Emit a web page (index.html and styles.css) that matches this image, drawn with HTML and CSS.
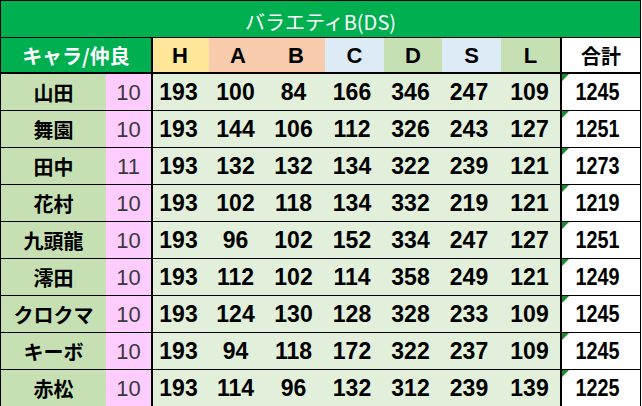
FILE: index.html
```html
<!DOCTYPE html>
<html lang="ja">
<head>
<meta charset="utf-8">
<title>バラエティB(DS)</title>
<link rel="stylesheet" href="styles.css">
</head>
<body>
<div class="sheet">
  <div class="title">バラエティB(DS)</div>

  <div class="hd hd-name">キャラ/仲良</div>
  <div class="hd c-h">H</div>
  <div class="hd c-a">A</div>
  <div class="hd c-b">B</div>
  <div class="hd c-c">C</div>
  <div class="hd c-d">D</div>
  <div class="hd c-s">S</div>
  <div class="hd c-l">L</div>
  <div class="hd c-total">合計</div>

  <div class="name">山田</div><div class="fav">10</div>
  <div class="num">193</div><div class="num">100</div><div class="num">84</div><div class="num">166</div><div class="num">346</div><div class="num">247</div><div class="num last">109</div>
  <div class="total"><span>1245</span></div>

  <div class="name">舞園</div><div class="fav">10</div>
  <div class="num">193</div><div class="num">144</div><div class="num">106</div><div class="num">112</div><div class="num">326</div><div class="num">243</div><div class="num last">127</div>
  <div class="total"><span>1251</span></div>

  <div class="name">田中</div><div class="fav">11</div>
  <div class="num">193</div><div class="num">132</div><div class="num">132</div><div class="num">134</div><div class="num">322</div><div class="num">239</div><div class="num last">121</div>
  <div class="total"><span>1273</span></div>

  <div class="name">花村</div><div class="fav">10</div>
  <div class="num">193</div><div class="num">102</div><div class="num">118</div><div class="num">134</div><div class="num">332</div><div class="num">219</div><div class="num last">121</div>
  <div class="total"><span>1219</span></div>

  <div class="name">九頭龍</div><div class="fav">10</div>
  <div class="num">193</div><div class="num">96</div><div class="num">102</div><div class="num">152</div><div class="num">334</div><div class="num">247</div><div class="num last">127</div>
  <div class="total"><span>1251</span></div>

  <div class="name">澪田</div><div class="fav">10</div>
  <div class="num">193</div><div class="num">112</div><div class="num">102</div><div class="num">114</div><div class="num">358</div><div class="num">249</div><div class="num last">121</div>
  <div class="total"><span>1249</span></div>

  <div class="name">クロクマ</div><div class="fav">10</div>
  <div class="num">193</div><div class="num">124</div><div class="num">130</div><div class="num">128</div><div class="num">328</div><div class="num">233</div><div class="num last">109</div>
  <div class="total"><span>1245</span></div>

  <div class="name">キーボ</div><div class="fav">10</div>
  <div class="num">193</div><div class="num">94</div><div class="num">118</div><div class="num">172</div><div class="num">322</div><div class="num">237</div><div class="num last">109</div>
  <div class="total"><span>1245</span></div>

  <div class="name">赤松</div><div class="fav">10</div>
  <div class="num">193</div><div class="num">114</div><div class="num">96</div><div class="num">132</div><div class="num">312</div><div class="num">239</div><div class="num last">139</div>
  <div class="total"><span>1225</span></div>
</div>
</body>
</html>
```

FILE: styles.css
```css
html, body {
  margin: 0;
  padding: 0;
  background: #ffffff;
}

.sheet {
  width: 641px;
  height: 406px;
  box-sizing: border-box;
  border-top: 1px solid #000;
  border-left: 1px solid #000;
  border-right: 1px solid #000;
  overflow: hidden;
  display: grid;
  grid-template-columns: 105px 47px 56px 58px 58px 59px 58px 59px 61px 78px;
  grid-template-rows: 37px 36px repeat(9, 37px);
  font-family: "Liberation Sans", "Noto Sans CJK JP", sans-serif;
  color: #000;
}

.sheet > div {
  box-sizing: border-box;
  display: flex;
  align-items: center;
  justify-content: center;
  border-bottom: 1px solid #000;
}

.title {
  grid-column: 1 / -1;
  background: #00b050;
  color: #ffffff;
  font-family: "Noto Sans CJK JP", sans-serif;
  font-size: 20px;
  padding-top: 5px;
}

.hd {
  border-bottom: 2px solid #000 !important;
  font-size: 22px;
  font-weight: bold;
  padding-top: 1px;
}

.hd-name {
  grid-column: span 2;
  background: #00b050;
  color: #ffffff;
  font-family: "Noto Sans CJK JP", sans-serif;
  font-size: 20px;
  border-right: 2px solid #000;
}

.c-h { background: #ffe699; padding-right: 2px; }
.c-a { background: #f8cbad; }
.c-b { background: #f8cbad; }
.c-c { background: #ddebf7; }
.c-d { background: #c6e0b4; }
.c-s { background: #ddebf7; }
.c-l { background: #c6e0b4; border-right: 2px solid #000; }
.c-total {
  background: #ffffff;
  font-family: "Noto Sans CJK JP", sans-serif;
  font-size: 20px;
}

.name {
  background: #c6e0b4;
  font-family: "Noto Sans CJK JP", sans-serif;
  font-weight: bold;
  font-size: 20px;
}

.fav {
  background: #ffccff;
  border-right: 2px solid #000;
  color: #3a3a3a;
  font-size: 22px;
  padding-top: 1px;
}

.num {
  background: #e2efda;
  font-weight: bold;
  font-size: 23px;
  padding-right: 5px;
  padding-top: 1px;
}

.num.last {
  border-right: 2px solid #000;
  padding-right: 2px;
}

.total {
  position: relative;
  background: #ffffff;
  font-weight: bold;
  font-size: 23px;
  padding-right: 6px;
  padding-top: 1px;
}

.total span {
  display: inline-block;
  transform: scaleX(0.86);
}

.total::before {
  content: "";
  position: absolute;
  left: 0;
  top: 0;
  border-top: 7px solid #1d8a2e;
  border-right: 7px solid transparent;
}
```
